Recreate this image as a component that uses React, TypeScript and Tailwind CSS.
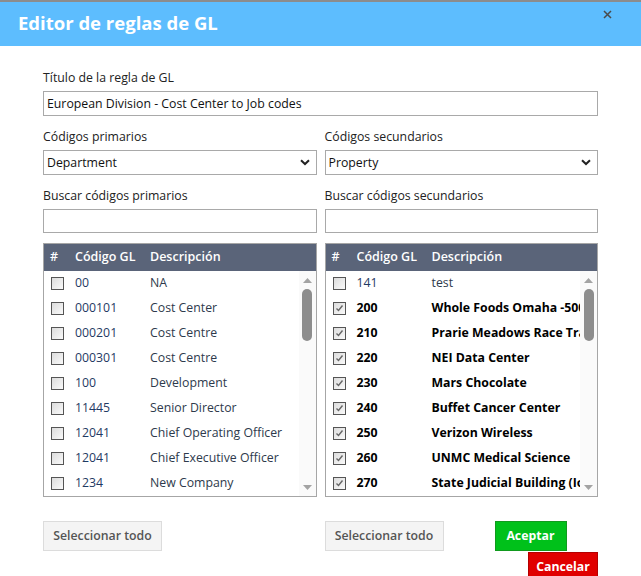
import React from "react";

type Row = { code: string; desc: string; checked?: boolean };

const primary: Row[] = [
  { code: "00", desc: "NA" },
  { code: "000101", desc: "Cost Center" },
  { code: "000201", desc: "Cost Centre" },
  { code: "000301", desc: "Cost Centre" },
  { code: "100", desc: "Development" },
  { code: "11445", desc: "Senior Director" },
  { code: "12041", desc: "Chief Operating Officer" },
  { code: "12041", desc: "Chief Executive Officer" },
  { code: "1234", desc: "New Company" },
];

const secondary: Row[] = [
  { code: "141", desc: "test" },
  { code: "200", desc: "Whole Foods Omaha -5001", checked: true },
  { code: "210", desc: "Prarie Meadows Race Track", checked: true },
  { code: "220", desc: "NEI Data Center", checked: true },
  { code: "230", desc: "Mars Chocolate", checked: true },
  { code: "240", desc: "Buffet Cancer Center", checked: true },
  { code: "250", desc: "Verizon Wireless", checked: true },
  { code: "260", desc: "UNMC Medical Science", checked: true },
  { code: "270", desc: "State Judicial Building (Iowa)", checked: true },
];

function Checkbox({ checked }: { checked?: boolean }) {
  return (
    <span className="flex h-[13px] w-[13px] items-center justify-center border border-[#555] bg-gradient-to-br from-[#dcdcdc] to-[#fafafa]">
      {checked && (
        <svg width="9" height="9" viewBox="0 0 9 9">
          <path d="M1.5 4.5 L3.5 6.5 L7.5 1.5" fill="none" stroke="#666" strokeWidth="1.4" />
        </svg>
      )}
    </span>
  );
}

function Chevron() {
  return (
    <svg width="10" height="7" viewBox="0 0 10 7" className="absolute right-[6px] top-[8px]">
      <path d="M1 1.2 L5 5 L9 1.2" fill="none" stroke="#222" strokeWidth="2" />
    </svg>
  );
}

function Field({ label, children, className }: { label: string; children: React.ReactNode; className?: string }) {
  return (
    <div className={className}>
      <div className="h-[20px] text-[12.3px] leading-[20px] text-[#222]">{label}</div>
      <div className="mt-[3px]">{children}</div>
    </div>
  );
}

function SelectBox({ value }: { value: string }) {
  return (
    <div className="relative h-[25px] border border-[#a9a9a9] bg-white pl-[3px] text-[12.3px] leading-[23px] text-[#111]">
      {value}
      <Chevron />
    </div>
  );
}

function CodeTable({ rows }: { rows: Row[] }) {
  return (
    <div className="border border-[#a6a6a6]">
      <div className="flex h-[27px] items-center bg-[#5a6479] text-[12.5px] font-semibold text-white">
        <span className="w-[31px] shrink-0 pl-[6px]">#</span>
        <span className="w-[75px] shrink-0">Código GL</span>
        <span>Descripción</span>
      </div>
      <div className="flex h-[225px]">
        <div className="min-w-0 flex-1 overflow-hidden">
          {rows.map((r, i) => (
            <div key={i} className="flex h-[25px] items-center whitespace-nowrap text-[12.3px]">
              <span className="w-[31px] shrink-0 pl-[7px]">
                <Checkbox checked={r.checked} />
              </span>
              <span className={r.checked ? "w-[75px] shrink-0 font-bold text-black" : "w-[75px] shrink-0 text-[#1f3a63]"}>
                {r.code}
              </span>
              <span className={r.checked ? "font-bold text-black" : "text-[#2e3a4c]"}>{r.desc}</span>
            </div>
          ))}
        </div>
        <div className="flex w-[17px] shrink-0 flex-col items-center bg-[#fafafa]">
          <svg width="9" height="5" viewBox="0 0 9 5" className="mt-[7px]">
            <path d="M0 5 L4.5 0 L9 5 Z" fill="#a3a3a3" />
          </svg>
          <div className="mt-[6px] h-[52px] w-[10px] rounded-full bg-[#8d8d8d]" />
          <svg width="9" height="5" viewBox="0 0 9 5" className="mb-[6px] mt-auto">
            <path d="M0 0 L4.5 5 L9 0 Z" fill="#a3a3a3" />
          </svg>
        </div>
      </div>
    </div>
  );
}

function GrayButton() {
  return (
    <button className="h-[30px] w-[119px] border border-[#dcdcdc] bg-[#f4f4f4] text-[12.3px] font-semibold text-[#555]">
      Seleccionar todo
    </button>
  );
}

export default function App() {
  return (
    <div className="h-[576px] w-[641px] overflow-hidden bg-white" style={{ fontFamily: '"Open Sans", "Noto Sans", sans-serif' }}>
      {/* Header */}
      <div className="relative h-[46px] border-t-2 border-[#8c8c8c] bg-[#5dbdfe]">
        <h1 className="pl-[18px] pt-[8px] text-[18.5px] font-bold leading-[26px] text-white">Editor de reglas de GL</h1>
        <svg width="9" height="9" viewBox="0 0 9 9" className="absolute right-[29px] top-[8px]">
          <path d="M1 1 L8 8 M8 1 L1 8" stroke="#4a4a4a" strokeWidth="1.5" />
        </svg>
      </div>

      <div className="px-[43px] pt-[22px]">
        <Field label="Título de la regla de GL">
          <div className="h-[25px] border border-[#a9a9a9] pl-[3px] text-[12.3px] leading-[23px] text-[#111]">
            European Division - Cost Center to Job codes
          </div>
        </Field>

        <div className="mt-[11px] grid grid-cols-2 gap-x-[8px]">
          <Field label="Códigos primarios">
            <SelectBox value="Department" />
          </Field>
          <Field label="Códigos secundarios">
            <SelectBox value="Property" />
          </Field>
          <Field label="Buscar códigos primarios" className="mt-[11px]">
            <div className="h-[24px] border border-[#a9a9a9]" />
          </Field>
          <Field label="Buscar códigos secundarios" className="mt-[11px]">
            <div className="h-[24px] border border-[#a9a9a9]" />
          </Field>
          <div className="mt-[10px]">
            <CodeTable rows={primary} />
          </div>
          <div className="mt-[10px]">
            <CodeTable rows={secondary} />
          </div>
          <div className="mt-[24px]">
            <GrayButton />
          </div>
          <div className="mt-[24px]">
            <div className="flex items-start">
              <GrayButton />
              <button className="ml-[51px] h-[30px] w-[72px] border border-[#119a1e] bg-[#00c11a] text-[12.3px] font-bold text-white">
                Aceptar
              </button>
            </div>
            <div className="mt-[1px] flex justify-end">
              <button className="h-[30px] w-[70px] border border-[#b30000] bg-[#e00000] text-[12.3px] font-bold text-white">
                Cancelar
              </button>
            </div>
          </div>
        </div>
      </div>
    </div>
  );
}
